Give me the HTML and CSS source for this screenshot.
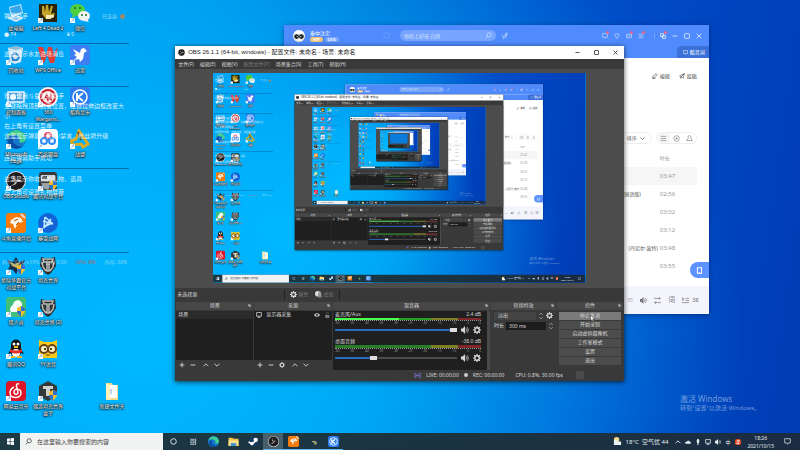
FILE: index.html
```
<!DOCTYPE html>
<html lang="zh-CN">
<head>
    <meta charset="utf-8">
    <title>桌面</title>
    <link rel="stylesheet" href="styles.css">
</head>
<body>
    <svg class="sprite" aria-hidden="true">
        <symbol id="pc" viewBox="0 0 20 20"><path d="M3 4l12-3 2 9-12 4z" fill="#bfe6fb"/><path d="M4 5l10-3 2 7-10 3z" fill="#36a4e8"/><path d="M1 15l9-3 8 3-8 4z" fill="#d6eefb"/><path d="M4 15l6-2 5 2-5 2z" fill="#6eb8e2"/></symbol>
        <symbol id="l4d" viewBox="0 0 20 20"><path fill="#2b2408" d="M1 1h18v18H1z"/><path fill="#c4a52c" d="M4 3h2l1 6 1-7h2l1 7 2-6h2l-2 8 3-1 1 1-5 5H8L4 11z"/><path fill="#f3e9b4" d="M8 12h8v2l-4 2H8z"/></symbol>
        <symbol id="wechat" viewBox="0 0 20 20"><ellipse cx="7.500" cy="7" rx="7.500" ry="6" fill="#4fcf3f"/><path d="M3 11l-1 4 4-2z" fill="#4fcf3f"/><ellipse cx="14" cy="13" rx="6" ry="5" fill="#f1f3f2"/><path d="M17 16l2 3-5-1z" fill="#f1f3f2"/><g fill="#14702a"><circle cx="5" cy="5" r="1"/><circle cx="10" cy="5" r="1"/><circle cx="12" cy="12" r="1"/><circle cx="16" cy="12" r="1"/></g></symbol>
        <symbol id="bin" viewBox="0 0 20 20"><path d="M2 3l8-2 7 2-2 14-6 2-5-2z" fill="#cfe6f3"/><path d="M2 3l8 2 7-2-7-2z" fill="#8fb9d2"/><path d="M6 11l2-3 3 1 2 3-2 3H7z" fill="none" stroke="#2783d2" stroke-width="2"/></symbol>
        <symbol id="wps" viewBox="0 0 20 20"><path d="M0 2h5l3 9 2-9h4l2 9 1-5 3-4-4 16h-4l-3-8-3 8H4z" fill="#e23b33"/></symbol>
        <symbol id="bird" viewBox="0 0 20 20"><rect width="20" height="20" rx="3" fill="#3f7df4"/><path d="M3 4l7 4 1-4 3-1 3 3-3 2-1 6-3 3-1-3-5 1 3-3-3-2 2-1z" fill="#fff"/></symbol>
        <symbol id="panel" viewBox="0 0 20 20"><rect x="1" y="4" width="18" height="12" rx="1" fill="#bfe2f6"/><path d="M3 6h14v8H3z" fill="#3a99da"/><circle cx="7" cy="10" r="3" fill="#e8f5fc"/><path d="M11 8h5M11 11h5" stroke="#fff"/></symbol>
        <symbol id="wargaming" viewBox="0 0 20 20"><circle cx="10" cy="10" r="10" fill="#f4f1f1"/><circle cx="10" cy="10" r="7" fill="none" stroke="#c81e2b" stroke-width="2"/><path d="M5 13l4-7 2 5 2-6 1 9-3-2-1 3-2-4z" fill="#c81e2b"/></symbol>
        <symbol id="kugou" viewBox="0 0 20 20"><rect width="20" height="20" rx="4" fill="#2a7df0"/><circle cx="10" cy="10" r="7" fill="none" stroke="#fff" stroke-width="1.500"/><path d="M7 6v8M13 6l-5 4 5 4" fill="none" stroke="#fff" stroke-width="2"/></symbol>
        <symbol id="edge" viewBox="0 0 20 20"><circle cx="10" cy="10" r="10" fill="#1777cf"/><path d="M1 8C3-1 17-2 20 9c0 4-4 6-7 4 2-4-1-7-5-7-3 0-6 1-7 3z" fill="#3fcf8e"/><path d="M8 8c-3 5 1 10 9 9-5 5-13 3-15-4 0-4 3-6 6-5z" fill="#0b4ea1"/></symbol>
        <symbol id="netdisk" viewBox="0 0 20 20"><rect width="20" height="20" rx="4" fill="#f8fbff"/><g fill="none" stroke-width="2"><circle cx="10" cy="7" r="3" stroke="#e9495b"/><circle cx="6" cy="12" r="3" stroke="#2c8df4"/><circle cx="14" cy="12" r="3" stroke="#2c8df4"/></g></symbol>
        <symbol id="alliance" viewBox="0 0 20 20"><path d="M9 2l9 13-5 3-2-3-8 1-2-4 5-2z" fill="none" stroke="#d9aa25" stroke-width="3"/><path d="M8 3l3 8" stroke="#5d4814" stroke-width="2"/></symbol>
        <symbol id="obs" viewBox="0 0 20 20"><circle cx="10" cy="10" r="10" fill="#ddd"/><circle cx="10" cy="10" r="9" fill="#1d1b1d"/><g fill="#c8c8c8"><path d="M9 2a5 5 0 0 0 0 8l2-1a4 4 0 0 1-2-7z"/><path d="M17 12a5 5 0 0 0-7-3l1 2a4 4 0 0 1 6 1z"/><path d="M4 14a5 5 0 0 0 7-3H9a4 4 0 0 1-5 3z"/></g></symbol>
        <symbol id="robot" viewBox="0 0 20 20"><rect x="1" y="1" width="18" height="18" rx="3" fill="#35373a"/><path d="M3 4h14v6H3z" fill="#c9d1d6"/><path d="M4 5h5v3H4z" fill="#1e2a35"/><path d="M3 12h8v6H6z" fill="#9aa3a8"/><use href="#shield"/></symbol>
        <symbol id="shield" viewBox="0 0 20 20"><path d="M11 11l4-2 4 2v4l-4 5-4-4z" fill="#f5bd2a"/><path d="M15 9v5h4v-3zM11 14h4v6l-4-4z" fill="#2b73cf"/></symbol>
        <symbol id="douyu" viewBox="0 0 20 20"><rect width="20" height="20" rx="3" fill="#f57c0c"/><path d="M5 7l5-3 5 1 2 4-5 1-3 6-2-5-3-1z" fill="#fff5e4"/><path d="M8 8l4-2M10 12l3-3" stroke="#a6500b"/><path d="M15 1l4 4" stroke="#ddd" stroke-width="2"/></symbol>
        <symbol id="battlenet" viewBox="0 0 20 20"><circle cx="10" cy="10" r="10" fill="#1464d8"/><path d="M7 4l7 6-8 4 1-10M5 8l10 3M13 6l-7 9" fill="none" stroke="#c4ecff" stroke-width="1.500"/></symbol>
        <symbol id="star" viewBox="0 0 20 20"><path d="M1 5l6 2 3-5 3 5 6-2-3 7 2 3-6 1-2 3-3-4-5-1 2-3z" fill="#192e4c"/><path d="M4 7l5 2 5-2-3 6-5-2z" fill="#bdb269"/><use href="#shield"/></symbol>
        <symbol id="tank" viewBox="0 0 20 20"><path d="M3 2l4 1h6l4-1 1 9-5 7-3 2-3-2-5-7z" fill="#2b2e2f"/><path d="M5 4h10l-1 3h-3v9H9V7H6zM4 7l1 5 3 4M16 7l-1 5-3 4" fill="none" stroke="#b9bcbb" stroke-width="1.500"/></symbol>
        <symbol id="green" viewBox="0 0 20 20"><rect width="20" height="20" rx="3" fill="#3fbf78"/><path d="M4 13c0-4 3-4 4-8 4-4 9-1 8 4l-3 6H5z" fill="#f5fff9"/><use href="#shield"/></symbol>
        <symbol id="qq" viewBox="0 0 20 20"><path d="M5 5c1-6 9-6 10 0v5l3 5-3-1-2 4H7l-2-4-3 1 3-5z" fill="#121212"/><ellipse cx="10" cy="14" rx="4" ry="4" fill="#fff"/><path d="M4 10c4 2 8 2 12 0v3c-4 2-8 2-12 0z" fill="#e02b2e"/><circle cx="8" cy="5" r="1.500" fill="#fff"/><circle cx="12" cy="5" r="1.500" fill="#fff"/><path d="M4 18h5M11 18h5M8 8h4" stroke="#f8b51c" stroke-width="2"/></symbol>
        <symbol id="yy" viewBox="0 0 20 20"><path d="M1 1l5 2h8l5-2v18H1z" fill="#f7c91c"/><circle cx="6" cy="10" r="4" fill="#fff3be" stroke="#69431b" stroke-width="2"/><circle cx="14" cy="10" r="4" fill="#fff3be" stroke="#69431b" stroke-width="2"/><circle cx="7" cy="10" r="1"/><circle cx="13" cy="10" r="1"/><path d="M8 16h4" stroke="#69431b"/></symbol>
        <symbol id="netease" viewBox="0 0 20 20"><rect width="20" height="20" rx="4" fill="#dc1528"/><path d="M13 3c-3-1-3 2-2 4l1 4c0 3-4 3-4 0 0-4 7-4 7 1 0 6-11 6-11 0 0-3 2-5 4-6" fill="none" stroke="#fff" stroke-width="1.500"/></symbol>
        <symbol id="box" viewBox="0 0 20 20"><path d="M10 0l9 5v10l-9 5-9-5V5z" fill="#33383a"/><path d="M5 5h10v3h-3v7H8V8H5z" fill="#d0d1c9"/><use href="#shield"/></symbol>
        <symbol id="folder" viewBox="0 0 20 20"><path d="M4 2h6l1 2h5v15H4z" fill="#f4d984"/><path d="M8 4h7v13H8z" fill="#f8fbff"/><path d="M4 2l4 2v15l-4-1z" fill="#fff2b9"/><path d="M9 8v5" stroke="#80b2e4"/></symbol>
        <symbol id="gear" viewBox="0 0 10 10"><circle cx="5" cy="5" r="2.800" fill="none" stroke="currentColor" stroke-width="1.700"/><path d="M5 0v2M5 8v2M0 5h2M8 5h2M1.500 1.500l1.300 1.300M7.200 7.200l1.300 1.300M8.500 1.500L7.200 2.800M2.800 7.200L1.500 8.500" stroke="currentColor" stroke-width="1.500"/></symbol>
        <symbol id="speaker" viewBox="0 0 10 10"><path d="M0 3h2l3-3v10L2 7H0z" fill="currentColor"/><path d="M6 3c1 1 1 3 0 4M7.500 1.500c2 2 2 5 0 7" fill="none" stroke="currentColor"/></symbol>
        <symbol id="plus" viewBox="0 0 10 10"><path d="M5 1v8M1 5h8" stroke="currentColor" stroke-width="1.500"/></symbol>
        <symbol id="minus" viewBox="0 0 10 10"><path d="M1 5h8" stroke="currentColor" stroke-width="1.500"/></symbol>
        <symbol id="up" viewBox="0 0 10 10"><path d="M1 7l4-4 4 4" fill="none" stroke="currentColor" stroke-width="1.500"/></symbol>
        <symbol id="down" viewBox="0 0 10 10"><path d="M1 3l4 4 4-4" fill="none" stroke="currentColor" stroke-width="1.500"/></symbol>
        <symbol id="square" viewBox="0 0 10 10"><rect x="1" y="1" width="8" height="8" rx="1" fill="none" stroke="currentColor" stroke-width="1.500"/></symbol>
        <symbol id="cross" viewBox="0 0 10 10"><path d="M1 1l8 8M9 1L1 9" stroke="currentColor" stroke-width="1.500"/></symbol>
        <symbol id="popout" viewBox="0 0 10 10"><path d="M1 1h5v5H1zM4 4h5v5H4z" fill="none" stroke="currentColor" stroke-width="1.500"/></symbol>
        <symbol id="search" viewBox="0 0 10 10"><circle cx="6" cy="4" r="3" fill="none" stroke="currentColor"/><path d="M4 6L1 9" stroke="currentColor"/></symbol>
        <symbol id="mic" viewBox="0 0 10 10"><path d="M2 4c0 6 6 5 6 0M4 8l-1 2M5 5l3-4 1 2-3 3z" fill="none" stroke="currentColor"/></symbol>
        <symbol id="bubble" viewBox="0 0 10 10"><path d="M1 1h8v6H6L5 9 4 7H1z" fill="none" stroke="currentColor"/></symbol>
        <symbol id="shirt" viewBox="0 0 10 10"><path d="M3 1l2 1 2-1 2 3-2 1-2 4-3-4-1-1z" fill="none" stroke="currentColor"/></symbol>
        <symbol id="mail" viewBox="0 0 10 10"><path d="M1 2h8v6H1zM2 4l3 2 3-2" fill="none" stroke="currentColor"/></symbol>
        <symbol id="lines" viewBox="0 0 10 10"><path d="M1 2h8M1 5h8M1 8h8" stroke="currentColor"/></symbol>
        <symbol id="queue" viewBox="0 0 10 10"><path d="M0 1l3 2-3 2zM5 2h5M5 5h5M0 8h10" fill="none" stroke="currentColor"/></symbol>
        <symbol id="pencil" viewBox="0 0 10 10"><path d="M1 9l1-4 5-4 2 2-5 5zM1 9h5" fill="none" stroke="currentColor"/></symbol>
        <symbol id="send" viewBox="0 0 10 10"><path d="M1 5l8-4-2 8-3-3-1 3-1-3zM4 6l5-5" fill="none" stroke="currentColor"/></symbol>
        <symbol id="target" viewBox="0 0 10 10"><circle cx="5" cy="5" r="4" fill="none" stroke="currentColor"/><path d="M4 3l3 2-3 2z" fill="currentColor"/></symbol>
        <symbol id="bell" viewBox="0 0 10 10"><path d="M1 8h8L7 5V3c0-3-4-3-4 0v2z" fill="none" stroke="currentColor"/></symbol>
        <symbol id="shuffle" viewBox="0 0 10 10"><path d="M0 2h9M7 0l2 2-2 2M10 8H1M3 6L1 8l2 2" fill="none" stroke="currentColor"/></symbol>
        <symbol id="phone" viewBox="0 0 10 10"><path d="M2 1h6v8H2z" fill="none" stroke="#fff" stroke-width="1.500"/><path d="M4 8h2" stroke="#fff"/></symbol>
        <symbol id="display" viewBox="0 0 10 10"><path d="M1 1h8v6H1zM3 9h4M5 7v2" fill="none" stroke="currentColor" stroke-width="1.300"/></symbol>
        <symbol id="eye" viewBox="0 0 10 10"><path d="M0 5c3-4 7-4 10 0-3 4-7 4-10 0z" fill="currentColor"/><circle cx="5" cy="5" r="2" fill="#1f1f1f"/><circle cx="5" cy="5" r="1" fill="currentColor"/></symbol>
        <symbol id="lock" viewBox="0 0 10 10"><path d="M2 5h7v5H2z" fill="currentColor"/><path d="M4 5V3c0-3 4-3 4 0" fill="none" stroke="currentColor"/></symbol>
        <symbol id="filter" viewBox="0 0 10 10"><circle cx="4" cy="4" r="4" fill="#ddd"/><circle cx="7" cy="7" r="3" fill="#777"/><path d="M5 0a4 4 0 0 1 0 8z" fill="#999"/></symbol>
        <symbol id="windows" viewBox="0 0 10 10"><path d="M0 1l4-.500V4.700H0zM5 .400L10 0v4.700H5zM0 5.500h4V9.500L0 9zM5 5.500h5V10l-5-.500z" fill="#fff"/></symbol>
        <symbol id="ring" viewBox="0 0 10 10"><circle cx="5" cy="5" r="4" fill="none" stroke="currentColor" stroke-width="1.300"/></symbol>
        <symbol id="tasks" viewBox="0 0 10 10"><path d="M1 1v1h5V1M1 4h5v3H1zM1 10V9h5v1M8 1v9M8 3h1" fill="none" stroke="currentColor"/></symbol>
        <symbol id="files" viewBox="0 0 20 20"><path d="M1 3h7l2 2h9v13H1z" fill="#f5c64b"/><path d="M1 8h18v10H1z" fill="#ffe08a"/><path d="M5 13h10v5H5z" fill="#3d91d2"/></symbol>
        <symbol id="steam" viewBox="0 0 20 20"><circle cx="10" cy="10" r="9" fill="#173a63"/><path d="M1 11l7 3 6-5" fill="none" stroke="#fff" stroke-width="3"/><circle cx="14" cy="7" r="4" fill="#fff"/><circle cx="7" cy="14" r="3" fill="#fff"/></symbol>
        <symbol id="weather" viewBox="0 0 10 10"><circle cx="4" cy="3" r="3" fill="#f5d98a"/><path d="M1 9V3h3l1 2h4v4z" fill="#e9f2f4"/></symbol>
        <symbol id="cloud" viewBox="0 0 10 10"><path d="M1 8c-2-3 1-4 2-3 1-3 5-2 5 0 3 0 2 3 1 3z" fill="currentColor"/></symbol>
        <symbol id="micro" viewBox="0 0 10 10"><rect x="3" y="0" width="4" height="7" rx="2" fill="currentColor"/><path d="M5 7v3" stroke="currentColor" stroke-width="2"/></symbol>
        <symbol id="sogou" viewBox="0 0 10 10"><rect width="10" height="10" rx="3" fill="#e8421e"/><path d="M8 3C5 1 1 4 5 5s2 4-3 2" fill="none" stroke="#fff" stroke-width="1.500"/></symbol>
        <symbol id="live" viewBox="0 0 10 10"><circle cx="5" cy="5" r="1.500" fill="currentColor"/><path d="M3 2c-2 2-2 4 0 6M7 2c2 2 2 4 0 6M1 1c-2 3-2 5 0 8M9 1c2 3 2 5 0 8" fill="none" stroke="currentColor"/></symbol>
        <symbol id="avatar" viewBox="0 0 20 20"><circle cx="10" cy="10" r="10" fill="#f2f0df"/><path d="M2 4c4-5 12-5 16 0l-3 2H5z" fill="#fff"/><ellipse cx="6" cy="11" rx="4" ry="4" fill="#15202b"/><ellipse cx="14" cy="11" rx="4" ry="4" fill="#15202b"/><circle cx="7" cy="11" r="1" fill="#fff"/><circle cx="13" cy="11" r="1" fill="#fff"/></symbol>
        <symbol id="pointer" viewBox="0 0 10 14"><path d="M1 0l8 8H6l2 4-2 1-2-4-3 3z" fill="#fff" stroke="#222"/></symbol>
    </svg>

    <main class="desktop">
        <nav class="shortcuts" aria-label="桌面图标">
            <a href="#"><svg><use href="#pc"/></svg>此电脑</a>
            <a href="#"><svg><use href="#l4d"/></svg>Left 4 Dead 2</a>
            <a href="#"><svg><use href="#wechat"/></svg>微信</a>
            <a class="first" href="#"><svg><use href="#bin"/></svg>回收站</a>
            <a href="#"><svg><use href="#wps"/></svg>WPS Office</a>
            <a href="#"><svg><use href="#bird"/></svg>迅雷</a>
            <a class="first" href="#"><svg><use href="#panel"/></svg>控制面板</a>
            <a href="#"><svg><use href="#wargaming"/></svg>360 Wargami...</a>
            <a href="#"><svg><use href="#kugou"/></svg>酷狗音乐</a>
            <a class="first" href="#"><svg><use href="#edge"/></svg>Microsoft Edge</a>
            <a href="#"><svg><use href="#netdisk"/></svg>百度网盘</a>
            <a href="#"><svg><use href="#alliance"/></svg>战盟</a>
            <a class="first" href="#"><svg><use href="#obs"/></svg>OBS Studio</a>
            <a href="#"><svg><use href="#robot"/></svg>腾讯对战平台</a>
            <a class="first" href="#"><svg><use href="#douyu"/></svg>斗鱼直播伴侣</a>
            <a href="#"><svg><use href="#battlenet"/></svg>暴雪战网</a>
            <a class="first" href="#"><svg><use href="#star"/></svg>星际争霸官方对战平台</a>
            <a href="#"><svg><use href="#tank"/></svg>坦克世界</a>
            <a class="first" href="#"><svg><use href="#green"/></svg>猎人谷</a>
            <a href="#"><svg><use href="#tank"/></svg>坦克世界 (2)</a>
            <a class="first" href="#"><svg><use href="#qq"/></svg>腾讯QQ</a>
            <a href="#"><svg><use href="#yy"/></svg>YY语音</a>
            <a class="first" href="#"><svg><use href="#netease"/></svg>网易云音乐</a>
            <a href="#"><svg><use href="#box"/></svg>偶游坦克世界盒子</a>
            <a class="last" href="#"><svg><use href="#folder"/></svg>新建文件夹</a>
        </nav>

        <aside class="danmaku">
            <section class="dm-head">
                <p><span>弹幕助手</span><small>已连接 <i></i></small></p>
                <p class="counts"><span>● 74</span><span>♛ 0</span></p>
            </section>
            <section class="dm-enter">这里显示水友进场消息</section>
            <section class="dm-chat">
                <p>欢迎使用斗鱼直播助手</p>
                <p>左键拖拽顶部改变位置，左键拉伸边框改变大小</p>
                <p>右上角有设置菜单</p>
                <p>这里显示弹幕，开通/禁言，粉丝牌升级</p>
                <p class="ok">连接弹幕助手成功</p>
            </section>
            <section class="dm-gift">
                <p>这里显示你收到的礼物、道具</p>
                <p>右上角可设置礼物屏蔽</p>
            </section>
            <section class="dm-stat"><span>码率: 0 kb/s FPS: 0 丢帧 0.00</span><b>CPU: 6%</b><span>内存: 30%</span></section>
        </aside>

        <p class="watermark"><strong>激活 Windows</strong>转到"设置"以激活 Windows。</p>

        <section class="music" aria-label="音乐">
            <header class="music-top">
                <svg class="avatar"><use href="#avatar"/></svg>
                <div class="user">秦中注定<span><b>VIP</b><b class="line">LV.6</b></span></div>
                <div class="history"><svg><use href="#ring"/></svg></div>
                <label class="music-search"><input type="text" aria-label="搜索音乐" value="你的上好佳 白鸽"><svg><use href="#search"/></svg></label>
                <svg><use href="#mic"/></svg>
                <div class="music-tools">
                    <button class="dot" aria-label="消息"><svg><use href="#bubble"/></svg></button>
                    <button aria-label="皮肤"><svg><use href="#shirt"/></svg></button>
                    <button class="dot" aria-label="邮件"><svg><use href="#mail"/></svg></button>
                    <button class="dot" aria-label="菜单"><svg><use href="#lines"/></svg></button>
                    <button class="dot split" aria-label="迷你模式"><svg><use href="#popout"/></svg></button>
                    <button aria-label="最小化"><svg><use href="#minus"/></svg></button>
                    <button aria-label="最大化"><svg><use href="#square"/></svg></button>
                    <button aria-label="关闭"><svg><use href="#cross"/></svg></button>
                </div>
            </header>
            <div class="music-tabs"><button><svg><use href="#bubble"/></svg>酷音词</button></div>
            <div class="music-actions">
                <button><svg><use href="#pencil"/></svg>编辑</button>
                <button><svg><use href="#send"/></svg>投稿</button>
            </div>
            <div class="music-sort">
                <button class="sort">排序<svg><use href="#down"/></svg></button>
                <div class="views">
                    <button class="on" aria-label="列表"><svg><use href="#lines"/></svg></button>
                    <button aria-label="播放"><svg><use href="#target"/></svg></button>
                    <button aria-label="提醒"><svg><use href="#bell"/></svg></button>
                </div>
            </div>
            <table>
                <thead><tr><th></th><th>时长</th></tr></thead>
                <tbody>
                    <tr class="on"><td></td><td>03:47</td></tr>
                    <tr><td><span class="short">(国语版)</span></td><td>02:56</td></tr>
                    <tr><td></td><td>03:02</td></tr>
                    <tr><td></td><td>03:12</td></tr>
                    <tr><td>(丹尼尔·波特)</td><td>03:48</td></tr>
                    <tr><td></td><td>03:55</td></tr>
                </tbody>
            </table>
            <button class="phone" aria-label="手机"><svg><use href="#phone"/></svg></button>
            <footer>
                <span>55</span>
                <svg><use href="#speaker"/></svg>
                <svg><use href="#shuffle"/></svg>
                <b>词</b>
                <svg><use href="#queue"/></svg>
                <b>38</b>
            </footer>
        </section>

        <section class="obs" aria-label="OBS">
            <header class="titlebar">
                <svg><use href="#obs"/></svg>
                <h1>OBS 26.1.1 (64-bit, windows) - 配置文件: 未命名 - 场景: 未命名</h1>
                <button aria-label="最小化"><svg><use href="#minus"/></svg></button>
                <button aria-label="最大化"><svg><use href="#square"/></svg></button>
                <button aria-label="关闭"><svg><use href="#cross"/></svg></button>
            </header>
            <nav class="menubar">
                <button>文件(F)</button><button>编辑(E)</button><button>视图(V)</button><button disabled>配置文件(P)</button><button>场景集合(S)</button><button>工具(T)</button><button>帮助(H)</button>
            </nav>
            <div class="stage"><div class="preview"></div></div>
            <div class="source-bar">
                <span>未选择源</span>
                <button disabled><svg><use href="#gear"/></svg>属性</button>
                <button disabled><svg><use href="#filter"/></svg>滤镜</button>
            </div>
            <div class="docks">
                <section class="dock">
                    <h2>场景<svg><use href="#popout"/></svg></h2>
                    <ul><li class="picked">场景</li></ul>
                    <div class="tools">
                        <button aria-label="添加场景"><svg><use href="#plus"/></svg></button>
                        <button aria-label="删除场景"><svg><use href="#minus"/></svg></button>
                        <button class="sep" aria-label="上移场景"><svg><use href="#up"/></svg></button>
                        <button aria-label="下移场景"><svg><use href="#down"/></svg></button>
                    </div>
                </section>
                <section class="dock">
                    <h2>来源<svg><use href="#popout"/></svg></h2>
                    <ul><li><svg><use href="#display"/></svg><span>显示器采集</span><svg><use href="#eye"/></svg><svg class="dim"><use href="#lock"/></svg></li></ul>
                    <div class="tools">
                        <button aria-label="添加来源"><svg><use href="#plus"/></svg></button>
                        <button aria-label="删除来源"><svg><use href="#minus"/></svg></button>
                        <button aria-label="来源设置"><svg><use href="#gear"/></svg></button>
                        <button class="sep" aria-label="上移来源"><svg><use href="#up"/></svg></button>
                        <button aria-label="下移来源"><svg><use href="#down"/></svg></button>
                    </div>
                </section>
                <section class="dock">
                    <h2>混音器<svg><use href="#popout"/></svg></h2>
                    <div class="mixer">
                        <div class="channel">
                            <p><span>麦克风/Aux</span><span>2.4 dB</span></p>
                            <div class="meter loud"></div>
                            <div class="ticks"><i>-60</i><i>-50</i><i>-40</i><i>-35</i><i>-30</i><i>-25</i><i>-20</i><i>-15</i><i>-10</i><i>-5</i><i>0</i></div>
                            <div class="volume">
                                <input type="range" aria-label="麦克风音量" value="100" style="--level: 100%">
                                <button aria-label="静音"><svg><use href="#speaker"/></svg></button>
                                <button aria-label="设置"><svg><use href="#gear"/></svg></button>
                            </div>
                        </div>
                        <div class="channel">
                            <p><span>桌面音频</span><span>-38.0 dB</span></p>
                            <div class="meter"></div>
                            <div class="ticks"><i>-60</i><i>-50</i><i>-40</i><i>-35</i><i>-30</i><i>-25</i><i>-20</i><i>-15</i><i>-10</i><i>-5</i><i>0</i></div>
                            <div class="volume">
                                <input type="range" aria-label="桌面音量" value="30" style="--level: 30%">
                                <button aria-label="静音"><svg><use href="#speaker"/></svg></button>
                                <button aria-label="设置"><svg><use href="#gear"/></svg></button>
                            </div>
                        </div>
                    </div>
                </section>
                <section class="dock">
                    <h2>转场特效<svg><use href="#popout"/></svg></h2>
                    <div class="transition">
                        <select aria-label="转场"><option>淡出</option></select>
                        <span class="spin"><svg><use href="#up"/></svg><svg><use href="#down"/></svg></span>
                        <button aria-label="转场设置"><svg><use href="#gear"/></svg></button>
                    </div>
                    <div class="transition">
                        <label>时长 <input type="text" value="300 ms"></label>
                        <span class="spin"><svg><use href="#up"/></svg><svg><use href="#down"/></svg></span>
                    </div>
                </section>
                <section class="dock">
                    <h2>控件<svg><use href="#popout"/></svg></h2>
                    <div class="controls">
                        <button class="hover">停止推流<svg class="pointer"><use href="#pointer"/></svg></button>
                        <button>开始录制</button>
                        <button>启动虚拟摄像机</button>
                        <button>工作室模式</button>
                        <button>设置</button>
                        <button>退出</button>
                    </div>
                </section>
            </div>
            <footer class="status">
                <svg class="on-air"><use href="#live"/></svg><span>LIVE: 00:00:00</span>
                <i></i><span>REC: 00:00:00</span>
                <span class="cpu">CPU: 0.8%, 30.00 fps</span><em></em>
            </footer>
        </section>

        <footer class="taskbar">
            <button class="start" aria-label="开始"><svg><use href="#windows"/></svg></button>
            <label class="task-search"><svg><use href="#search"/></svg><input type="text" aria-label="搜索" placeholder="在这里输入你要搜索的内容"></label>
            <div class="apps">
                <button class="mono" aria-label="Cortana"><svg><use href="#ring"/></svg></button>
                <button class="mono" aria-label="任务视图"><svg><use href="#tasks"/></svg></button>
                <button aria-label="Edge"><svg><use href="#edge"/></svg></button>
                <button aria-label="文件"><svg><use href="#files"/></svg></button>
                <button aria-label="Steam"><svg><use href="#steam"/></svg></button>
                <button class="open active" aria-label="OBS"><svg><use href="#obs"/></svg></button>
                <button class="open" aria-label="斗鱼"><svg><use href="#douyu"/></svg></button>
                <button class="open mono" aria-label="工具"><svg><use href="#star"/></svg></button>
                <button class="open" aria-label="酷狗"><svg><use href="#kugou"/></svg></button>
            </div>
            <div class="tray">
                <svg class="weather"><use href="#weather"/></svg><span>18°C&nbsp; 空气优 44</span>
                <svg class="first"><use href="#up"/></svg>
                <svg><use href="#cloud"/></svg>
                <svg><use href="#micro"/></svg>
                <svg><use href="#display"/></svg>
                <svg><use href="#speaker"/></svg>
                <b>中</b>
                <svg><use href="#sogou"/></svg>
                <time datetime="2021-10-15T18:26">18:26<br>2021/10/15</time>
                <svg class="notice"><use href="#bubble"/></svg>
            </div>
        </footer>
    </main>

    <script>
        // the display capture shows the desktop inside itself
        const desktop = document.querySelector(".desktop");
        const blank = desktop.cloneNode(true);
        const depth = 4;
        let inner = null;
        for (let i = 0; i < depth; i++) {
            const copy = blank.cloneNode(true);
            copy.classList.add("mirror");
            copy.setAttribute("aria-hidden", "true");
            copy.inert = true;
            if (inner) {
                copy.querySelector(".preview").append(inner);
            }
            inner = copy;
        }
        desktop.querySelector(".preview").append(inner);
    </script>
</body>
</html>
```
FILE: styles.css
```
* {
    margin: 0;
    padding: 0;
    box-sizing: border-box;
}
body {
    font-family: "Noto Sans", "Noto Sans CJK SC", sans-serif;
    font-size: 6px;
    line-height: 8px;
    overflow: hidden;
}
button, input, select {
    font: inherit;
    color: inherit;
    background: none;
    border: 0;
}
button {
    display: flex;
    align-items: center;
    justify-content: center;
}
svg {
    display: block;
    flex: none;
    width: 7px;
    height: 7px;
}
.sprite {
    position: absolute;
    width: 0;
    height: 0;
}

/* desktop */
.desktop {
    position: relative;
    height: 100vh;
    overflow: hidden;
    background:
        radial-gradient(ellipse 75% 115% at 18% 75%, rgba(0, 184, 255, 1) 0%, rgba(0, 178, 252, 0.85) 40%, rgba(0, 160, 245, 0) 100%),
        linear-gradient(98deg, #009df0 0%, #008fe6 24%, #0070d4 42%, #0055cc 62%, #0047c2 80%, #003cb4 100%);
}
.mirror {
    width: calc(100% / 0.466);
    height: auto;
    aspect-ratio: 16 / 9;
    transform: scale(0.466);
    transform-origin: 0 0;
}
.shortcuts {
    display: grid;
    grid-template-columns: repeat(4, 32px);
    grid-auto-rows: 42px;
    padding-top: 3px;
}
.shortcuts a {
    position: relative;
    display: flex;
    flex-direction: column;
    align-items: center;
    color: #fff;
    font-size: 5px;
    line-height: 7px;
    text-align: center;
    text-decoration: none;
    text-shadow: 0 0 1px #000, 0 0 2px #000, 0 1px 2px #000;
}
.shortcuts .first {
    grid-column: 1;
}
.shortcuts .last {
    grid-column: 4;
}
.shortcuts svg {
    width: 20px;
    height: 20px;
    margin-bottom: 2px;
}
.shortcuts a::after {
    content: "↗";
    position: absolute;
    left: 6px;
    top: 15px;
    width: 5px;
    height: 5px;
    font-size: 5px;
    line-height: 5px;
    color: #1660b8;
    background: #fff;
    text-shadow: none;
}
.shortcuts a:first-child::after, .shortcuts .last::after {
    display: none;
}

/* stream helper overlay */
.danmaku {
    position: absolute;
    left: 0;
    top: 0;
    width: 129px;
    line-height: 10px;
    color: rgba(255, 255, 255, 0.85);
}
.danmaku section {
    padding: 5px 4px;
    border-bottom: 1px solid rgba(0, 60, 110, 0.55);
}
.danmaku .dm-head {
    height: 44px;
    padding-top: 11px;
}
.dm-head p {
    display: flex;
    justify-content: space-between;
}
.dm-head small {
    display: flex;
    align-items: center;
    gap: 3px;
    font-size: 5px;
    opacity: 0.6;
}
.dm-head i {
    width: 5px;
    height: 5px;
    border-radius: 50%;
    background: #ff7a1c;
}
.danmaku .dm-head .counts {
    justify-content: flex-start;
    gap: 50px;
    padding-top: 8px;
    font-size: 5px;
}
.danmaku .dm-enter {
    height: 43px;
}
.danmaku .dm-chat {
    height: 82px;
    padding-top: 4px;
}
.dm-chat p {
    margin-bottom: 0;
}
.dm-chat .ok {
    padding-top: 12px;
}
.danmaku .dm-gift {
    height: 84px;
}
.dm-gift p {
    padding-bottom: 3px;
}
.danmaku .dm-stat {
    display: flex;
    justify-content: space-between;
    border: 0;
    padding: 4px 2px;
    font-size: 5px;
    opacity: 0.6;
}
.dm-stat b {
    color: #d0584c;
}
.watermark {
    position: absolute;
    left: 85%;
    bottom: 37px;
    color: rgba(255, 255, 255, 0.45);
    line-height: 9px;
}
.watermark strong {
    display: block;
    font-size: 8px;
    font-weight: 400;
    line-height: 10px;
}

/* music player window */
.music {
    position: absolute;
    left: 35.5%;
    top: 25px;
    width: 53.1%;
    height: 289px;
    display: flex;
    flex-direction: column;
    background: #fff;
    color: #555;
    box-shadow: 0 1px 5px rgba(0, 20, 80, 0.5);
}
.music-top {
    display: flex;
    align-items: center;
    gap: 5px;
    height: 21px;
    padding: 0 7px 0 9px;
    color: #d5e4ff;
    background: #4f8bfc;
}
.avatar {
    width: 12px;
    height: 12px;
}
.user {
    width: 68px;
    font-size: 5px;
    line-height: 7px;
    color: #fff;
}
.user span {
    display: flex;
    gap: 2px;
}
.user b {
    padding: 0 3px;
    border-radius: 3px;
    background: #edc57a;
    font-size: 4px;
    line-height: 5px;
}
.user .line {
    background: #7aa8ff;
}
.history {
    color: #6a9efd;
}
.music-search {
    display: flex;
    align-items: center;
    width: 96px;
    height: 11px;
    margin-left: 5px;
    padding: 0 4px;
    border-radius: 6px;
    background: #77a5fd;
}
.music-search input {
    flex: 1;
    min-width: 0;
    font-size: 5px;
}
.music-tools {
    display: flex;
    gap: 6px;
    margin-left: auto;
}
.music-tools button {
    position: relative;
}
.music-tools svg {
    width: 6px;
    height: 6px;
}
.music-tools .split {
    margin-left: 4px;
    padding-left: 5px;
    border-left: 1px solid #74a3fc;
}
.music-tools .dot::after {
    content: "";
    position: absolute;
    right: -1px;
    top: -2px;
    width: 3px;
    height: 3px;
    border-radius: 50%;
    background: #f0688b;
}
.music-tabs {
    display: flex;
    justify-content: flex-end;
    height: 12px;
    background: #4f8bfc;
}
.music-tabs button {
    gap: 2px;
    padding: 0 4px 0 6px;
    border-radius: 5px 0 0 0;
    color: #fff;
    background: #3a70d8;
    font-size: 5px;
}
.music-tabs svg {
    width: 5px;
    height: 5px;
}
.music-actions {
    display: flex;
    justify-content: flex-end;
    gap: 9px;
    padding: 14px 12px 47px;
}
.music-actions button {
    gap: 2px;
    color: #444;
    font-size: 5px;
    line-height: 8px;
}
.music-actions svg {
    width: 6px;
    height: 6px;
}
.music-sort {
    display: flex;
    justify-content: flex-end;
    gap: 4px;
    padding: 5px 12px;
}
.sort {
    gap: 3px;
    height: 12px;
    padding: 0 6px;
    border: 1px solid #eee;
    border-radius: 6px;
    font-size: 5px;
}
.sort svg {
    width: 5px;
    height: 5px;
}
.views {
    display: flex;
    border: 1px solid #eee;
    border-radius: 6px;
    overflow: hidden;
}
.views button {
    width: 13px;
    height: 10px;
    color: #888;
}
.views .on {
    background: #e9e9e9;
}
.music table {
    margin-right: 12px;
    border-collapse: collapse;
    color: #888;
}
.music th, .music td {
    height: 18px;
    font-weight: 400;
    text-align: right;
    white-space: nowrap;
}
.music th {
    font-size: 5px;
}
.music td {
    color: #555;
    font-size: 5px;
}
.music th:last-child, .music td:last-child {
    width: 39px;
    padding-left: 2px;
    color: #999;
    text-align: left;
}
.music td:last-child {
    font-size: 6px;
}
.music .on {
    background: #f6f6f6;
}
.music .short {
    padding-right: 17px;
}
.phone {
    position: absolute;
    right: 0;
    bottom: 36px;
    width: 19px;
    height: 16px;
    border-radius: 8px 0 0 8px;
    background: #5c93ff;
}
.music footer {
    display: flex;
    align-items: center;
    justify-content: flex-end;
    gap: 7px;
    height: 28px;
    margin-top: auto;
    padding-right: 10px;
    background: #f3f4fc;
    color: #777;
}
.music footer b {
    font-weight: 400;
    font-size: 7px;
}
.music footer b:last-child {
    margin-left: -4px;
    font-size: 6px;
}
.music footer span {
    font-size: 5px;
    color: #aaa;
}

/* obs window */
.obs {
    position: absolute;
    left: 21.9%;
    top: 46px;
    width: 56.1%;
    background: #393939;
    color: #d8d8d8;
    font-size: 5px;
    line-height: 7px;
    box-shadow: 0 1px 5px rgba(0, 0, 0, 0.7);
}
.titlebar {
    display: flex;
    align-items: center;
    height: 13px;
    padding: 0 6px 0 3px;
    background: #fff;
    color: #222;
}
.titlebar h1 {
    margin: 0 auto 0 3px;
    font-family: "Liberation Sans", "Noto Sans CJK SC", sans-serif;
    font-size: 6px;
    font-weight: 400;
}
.titlebar button {
    margin-left: 14px;
}
.titlebar button svg {
    width: 5px;
    height: 5px;
}
.menubar {
    display: flex;
    gap: 6px;
    height: 10px;
    padding-left: 3px;
}
.menubar button:disabled {
    color: #777;
}
.stage {
    padding: 4px 0 5px;
    background: #4c4c4c;
}
.preview {
    width: 83%;
    margin: 0 auto;
    aspect-ratio: 16 / 9;
    overflow: hidden;
    background: #0a7bd8;
}
.source-bar {
    display: flex;
    align-items: center;
    height: 14px;
    padding-left: 2px;
}
.source-bar span {
    width: 107px;
}
.source-bar button {
    gap: 1px;
    height: 10px;
    padding: 0 2px 0 5px;
    color: #777;
}
.source-bar button:nth-child(2) {
    border-left: 1px solid #222;
}
.source-bar button:last-child {
    padding-right: 6px;
    border-right: 1px solid #222;
}
.source-bar button:nth-child(2) svg {
    color: #ddd;
}
.docks {
    display: grid;
    grid-template-columns: 77fr 78fr 157fr 65fr 66fr;
    gap: 1px;
    padding: 0 1px;
}
.dock {
    display: flex;
    flex-direction: column;
    min-width: 0;
    height: 68px;
}
.dock h2 {
    display: flex;
    align-items: center;
    justify-content: center;
    height: 8px;
    margin-bottom: 1px;
    padding: 0 2px;
    background: #474747;
    font-size: 5px;
    font-weight: 400;
}
.dock h2 svg {
    width: 3px;
    height: 3px;
    margin-left: auto;
}
.dock h2::before {
    content: "";
    width: 3px;
    margin-right: auto;
}
.dock ul {
    flex: 1;
    list-style: none;
    background: #1f1f1f;
}
.dock li {
    display: flex;
    align-items: center;
    gap: 4px;
    height: 8px;
    padding: 0 2px;
}
.dock li span {
    margin-right: auto;
}
.dock li svg {
    width: 6px;
    height: 6px;
}
.dock .picked {
    background: #2b2b2b;
}
.dim {
    color: #777;
}
.tools {
    display: flex;
    align-items: center;
    gap: 5px;
    height: 10px;
    padding-left: 3px;
}
.tools svg {
    width: 6px;
    height: 6px;
}
.tools .sep {
    margin-left: 2px;
}
.mixer {
    flex: 1;
    padding: 0 6px 0 2px;
    border-right: 3px solid #4a4a4a;
    background: #1f1f1f;
}
.channel {
    height: 27px;
}
.channel p {
    display: flex;
    justify-content: space-between;
    height: 7px;
}
.meter {
    height: 3px;
    background: linear-gradient(to right, #267f26 66%, #7f7f26 66% 84%, #7f2626 84%);
}
.meter.loud {
    height: 2px;
    background: linear-gradient(to right, #4cff4c 44%, #26a026 44% 66%, #7f7f26 66% 84%, #7f2626 84%);
}
.ticks {
    display: flex;
    justify-content: space-between;
    height: 6px;
    border-top: 1px dotted #999;
    color: #999;
    font-size: 3px;
    line-height: 4px;
}
.ticks i {
    font-style: normal;
}
.volume {
    display: flex;
    align-items: center;
    gap: 4px;
    height: 8px;
}
.volume input {
    flex: 1;
    min-width: 0;
    height: 4px;
    appearance: none;
    background: linear-gradient(to right, #2a6cc4 var(--level), #4c4c4c var(--level)) center / 100% 2px no-repeat;
}
.volume input::-webkit-slider-thumb {
    appearance: none;
    width: 7px;
    height: 4px;
    background: #ddd;
}
.volume svg {
    width: 8px;
    height: 8px;
}
.transition {
    display: flex;
    align-items: center;
    gap: 3px;
    height: 10px;
    padding: 0 3px;
}
.transition select, .transition label {
    flex: 1;
    min-width: 0;
}
.transition select {
    appearance: none;
    height: 8px;
    padding-left: 4px;
    background: #444;
}
.transition label {
    display: flex;
    align-items: center;
    gap: 2px;
}
.transition input {
    flex: 1;
    min-width: 0;
    height: 8px;
    padding-left: 3px;
    background: #1c1c1c;
}
.spin svg {
    width: 4px;
    height: 4px;
}
.controls {
    display: grid;
    gap: 1px;
    padding: 1px 2px;
}
.controls button {
    position: relative;
    height: 8px;
    background: #4c4c4c;
}
.controls .hover {
    background: #7a7a7a;
}
.pointer {
    position: absolute;
    left: 50%;
    top: 3px;
    width: 5px;
    height: 7px;
    z-index: 1;
}
.status {
    display: flex;
    align-items: center;
    justify-content: flex-end;
    gap: 5px;
    height: 11px;
    padding-right: 40px;
}
.status i {
    width: 4px;
    height: 4px;
    border-radius: 50%;
    background: #ccc;
}
.status .on-air {
    color: #8585ff;
}
.status .cpu {
    margin: 0 8px 0 6px;
}
.status em {
    width: 8px;
    height: 8px;
    background: #4a4a4a;
}

/* taskbar */
.taskbar {
    position: absolute;
    left: 0;
    right: 0;
    bottom: 0;
    display: flex;
    height: 17px;
    background: linear-gradient(to right, #1c3944, #1b3340 60%, #1b2c42);
    color: #e4edf0;
}
.start {
    width: 20px;
}
.task-search {
    display: flex;
    align-items: center;
    gap: 5px;
    width: 143px;
    padding: 0 5px;
    background: #f1f2f2;
    color: #333;
}
.task-search input {
    flex: 1;
    min-width: 0;
}
.task-search input::placeholder {
    color: #444;
}
.apps {
    display: flex;
}
.apps button {
    width: 20px;
    border-bottom: 1px solid transparent;
}
.apps svg {
    width: 11px;
    height: 11px;
}
.apps .mono svg {
    width: 7px;
    height: 7px;
}
.apps .open {
    border-color: #62b5ea;
}
.apps .active {
    background: #48606a;
}
.tray {
    display: flex;
    align-items: center;
    gap: 4px;
    margin-left: auto;
    padding-right: 9px;
}
.tray svg, .tray b {
    width: 6px;
    height: 6px;
}
.tray b {
    font-weight: 400;
    font-size: 5px;
    line-height: 6px;
}
.tray .weather {
    width: 9px;
    height: 9px;
}
.tray .first {
    margin-left: 3px;
}
.tray time {
    padding: 0 6px 0 2px;
    font-size: 5px;
    text-align: center;
    line-height: 8px;
}
.tray .notice {
    width: 7px;
    height: 7px;
}
```
